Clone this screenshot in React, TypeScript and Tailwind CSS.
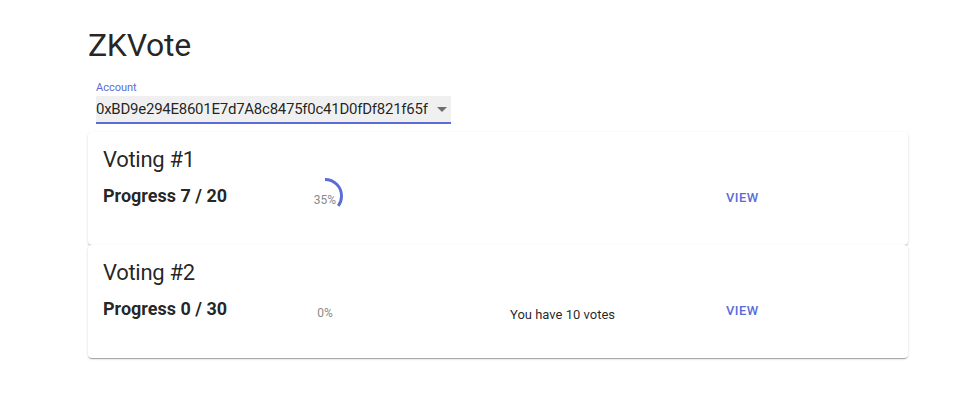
const PRIMARY = "#5a6dd6";

type Voting = { id: number; done: number; total: number; votes?: number };

const votings: Voting[] = [
  { id: 1, done: 7, total: 20 },
  { id: 2, done: 0, total: 30, votes: 10 },
];

// circular progress in the style of MUI
function Ring({ value }: { value: number }) {
  const c = 2 * Math.PI * 20.2;
  return (
    <div className="relative w-9 h-9 mt-[3px]">
      <svg viewBox="22 22 44 44" className="w-9 h-9 -rotate-90">
        <circle
          cx="44"
          cy="44"
          r="20.2"
          fill="none"
          stroke={PRIMARY}
          strokeWidth="3.6"
          strokeDasharray={c.toFixed(3)}
          style={{ strokeDashoffset: c * (1 - value / 100) }}
        />
      </svg>
      <div className="absolute inset-0 flex items-center justify-center">
        <span className="text-[12px] leading-[20px] text-[#8a8a8a] pt-[8px]">{value}%</span>
      </div>
    </div>
  );
}

function VotingCard({ v }: { v: Voting }) {
  const pct = Math.round((v.done / v.total) * 100);
  return (
    <div className="bg-white rounded shadow-[0_2px_1px_-1px_rgba(0,0,0,0.2),0_1px_1px_0_rgba(0,0,0,0.14),0_1px_3px_0_rgba(0,0,0,0.12)] pl-[15px] pr-4 pt-3 pb-6">
      <h2 className="text-[22px] leading-[31px] tracking-[-0.3px] font-normal">Voting #{v.id}</h2>
      <div className="flex items-start h-[46px]">
        <div className="w-[204px]">
          <div className="mt-[7px] text-[18px] leading-[28px] font-bold">
            Progress {v.done} / {v.total}
          </div>
        </div>
        <div className="w-[203px]">
          <Ring value={pct} />
        </div>
        <div className="w-[208px]">
          {v.votes !== undefined && (
            <div className="mt-[17px] text-[13px] leading-[20px]">You have {v.votes} votes</div>
          )}
        </div>
        <button className="mt-[12px] px-2 text-[13px] leading-[22px] font-medium uppercase tracking-[0.46px] text-[#5a6dd6]">
          View
        </button>
      </div>
    </div>
  );
}

export default function App() {
  return (
    <div className="min-h-screen bg-white font-['Roboto',sans-serif] text-[rgba(0,0,0,0.87)]">
      <div className="ml-[88px] w-[820px] pt-6">
        <h1 className="text-[32px] leading-[42px] tracking-[-0.3px] font-normal">ZKVote</h1>

        {/* account select */}
        <div className="ml-2 mt-4 w-[355px]">
          <label className="block text-[11px] leading-[12px] text-[#5a6dd6]">Account</label>
          <div className="mt-[2px] h-[26px] bg-[#f0f0f0] flex items-center justify-between">
            <span className="text-[15px] leading-[26px] tracking-[-0.25px]">0xBD9e294E8601E7d7A8c8475f0c41D0fDf821f65f</span>
            <svg viewBox="0 0 24 24" className="w-6 h-6 mr-[-3px] fill-[rgba(0,0,0,0.54)]">
              <path d="M7 10l5 5 5-5z" />
            </svg>
          </div>
          <div className="h-[2px] bg-[#5a6dd6]" />
        </div>

        <div className="mt-2 flex flex-col">
          {votings.map((v) => (
            <VotingCard key={v.id} v={v} />
          ))}
        </div>
      </div>
    </div>
  );
}
